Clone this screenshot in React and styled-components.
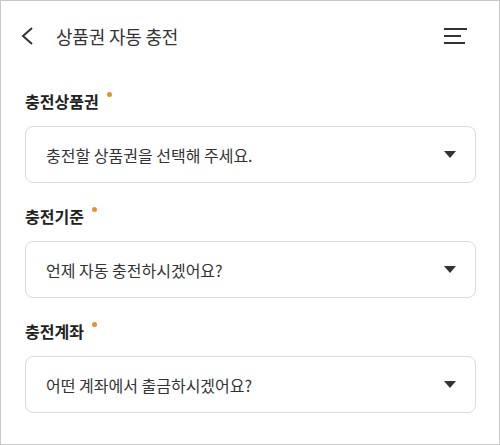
import React from "react";
import styled, { createGlobalStyle } from "styled-components";

const GlobalStyle = createGlobalStyle`
  * { box-sizing: border-box; }
  body {
    margin: 0;
    background: #ffffff;
    font-family: "Noto Sans CJK KR", "Noto Sans", sans-serif;
  }
`;

const Frame = styled.div`
  width: 500px;
  height: 445px;
  border: 1px solid #c9c9c9;
  background: #ffffff;
  overflow: hidden;
`;

const Header = styled.header`
  height: 69px;
  display: flex;
  align-items: center;
  padding: 0 31px 0 19px;
`;

const IconButton = styled.button`
  border: 0;
  background: none;
  padding: 0;
  display: flex;
  align-items: center;
  justify-content: center;
  cursor: pointer;
`;

const Title = styled.h1`
  flex: 1;
  margin: 0 0 0 21px;
  font-size: 18px;
  font-weight: 400;
  color: #333333;
  letter-spacing: -0.2px;
`;

const Content = styled.main`
  padding: 19px 23px 0 24px;
  display: flex;
  flex-direction: column;
  gap: 21px;
`;

const Field = styled.section`
  display: flex;
  flex-direction: column;
`;

const Label = styled.div`
  height: 24px;
  line-height: 24px;
  margin-bottom: 13px;
  font-size: 16px;
  font-weight: 700;
  color: #222222;
`;

const Required = styled.span`
  display: inline-block;
  width: 5px;
  height: 5px;
  margin-left: 8px;
  border-radius: 50%;
  background: #e8912a;
  vertical-align: top;
  margin-top: 3px;
`;

const Select = styled.button`
  height: 57px;
  width: 100%;
  display: flex;
  align-items: center;
  justify-content: space-between;
  padding: 0 19px 0 20px;
  border: 1px solid #dcdcdc;
  border-radius: 8px;
  background: #ffffff;
  font-family: inherit;
  font-size: 16px;
  color: #333333;
  text-align: left;
  cursor: pointer;
`;

const Caret = styled.span`
  width: 0;
  height: 0;
  border-left: 6px solid transparent;
  border-right: 6px solid transparent;
  border-top: 7px solid #333333;
`;

const fields = [
  { label: "충전상품권", placeholder: "충전할 상품권을 선택해 주세요." },
  { label: "충전기준", placeholder: "언제 자동 충전하시겠어요?" },
  { label: "충전계좌", placeholder: "어떤 계좌에서 출금하시겠어요?" },
];

export default function App() {
  return (
    <>
      <GlobalStyle />
      <Frame>
        <Header>
          <IconButton aria-label="뒤로">
            <svg width="15" height="20" viewBox="0 0 15 20">
              <path d="M12 2 L3 10 L12 18" fill="none" stroke="#333" strokeWidth="2" />
            </svg>
          </IconButton>
          <Title>상품권 자동 충전</Title>
          <IconButton aria-label="메뉴">
            <svg width="24" height="18" viewBox="0 0 24 18">
              <path d="M0 2 H23 M0 9 H17 M0 16 H21" stroke="#333" strokeWidth="2" />
            </svg>
          </IconButton>
        </Header>
        <Content>
          {fields.map((f) => (
            <Field key={f.label}>
              <Label>
                {f.label}
                <Required />
              </Label>
              <Select>
                {f.placeholder}
                <Caret />
              </Select>
            </Field>
          ))}
        </Content>
      </Frame>
    </>
  );
}
